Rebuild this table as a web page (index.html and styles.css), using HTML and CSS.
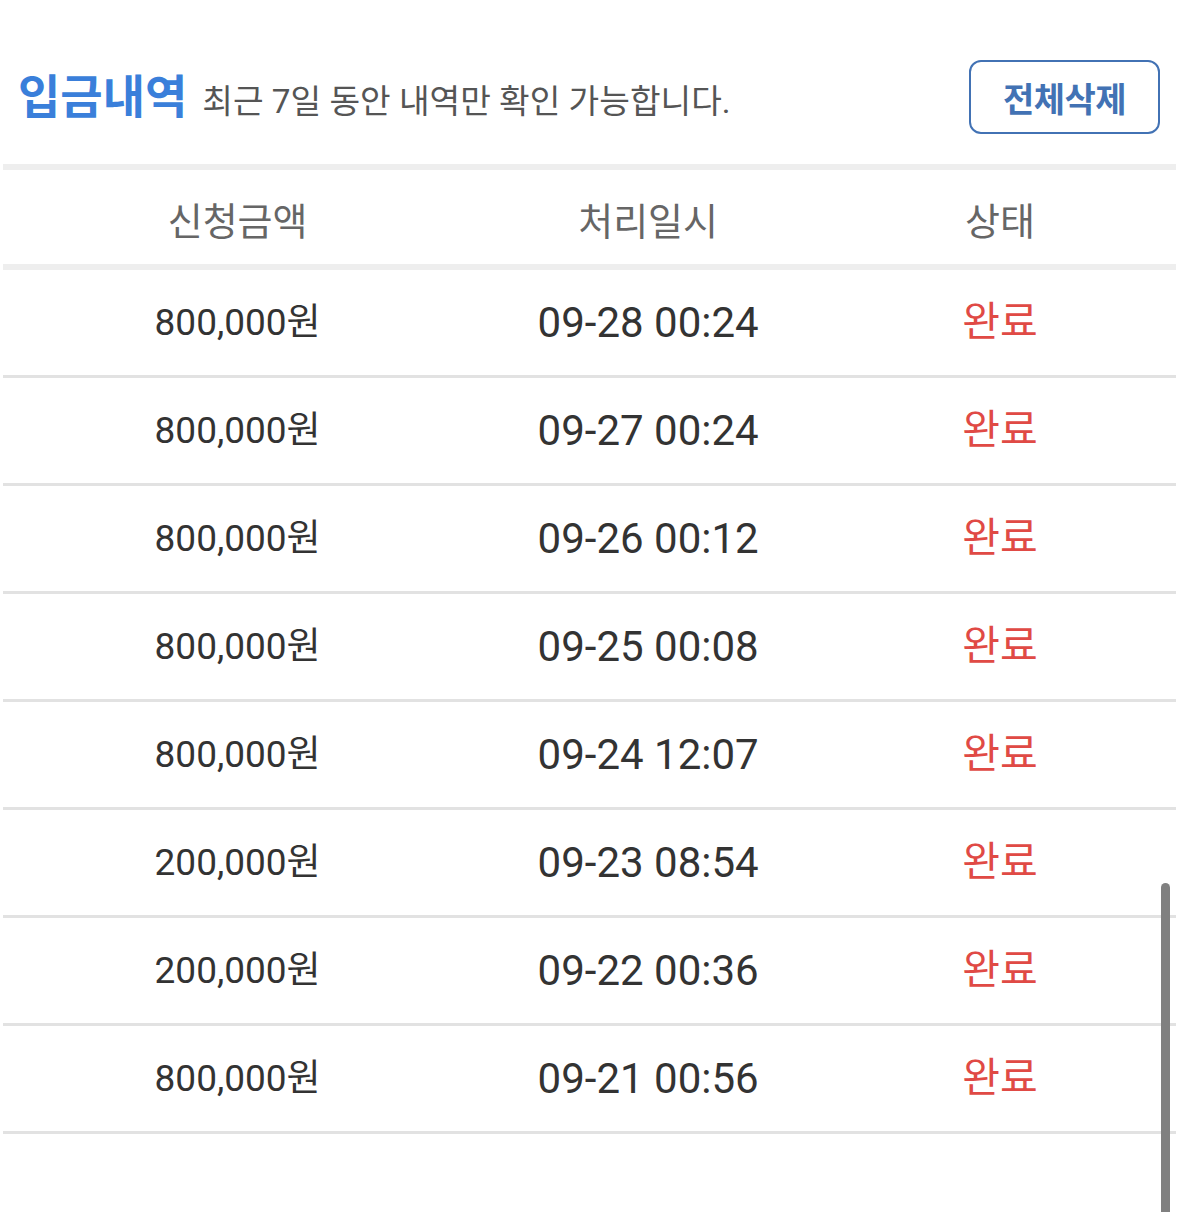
FILE: index.html
```html
<!DOCTYPE html>
<html lang="ko">
<head>
<meta charset="utf-8">
<title>입금내역</title>
<link rel="stylesheet" href="styles.css">
</head>
<body>
<div class="page">
  <header class="top">
    <div class="heading">
      <h1 class="title">입금내역</h1>
      <span class="subtitle">최근 7일 동안 내역만 확인 가능합니다.</span>
    </div>
    <button class="btn-delete" type="button">전체삭제</button>
  </header>

  <table class="history">
    <colgroup>
      <col class="c-amount">
      <col class="c-date">
      <col class="c-status">
    </colgroup>
    <thead>
      <tr>
        <th>신청금액</th>
        <th>처리일시</th>
        <th>상태</th>
      </tr>
    </thead>
    <tbody>
      <tr><td class="amount">800,000원</td><td class="date">09-28 00:24</td><td class="status">완료</td></tr>
      <tr><td class="amount">800,000원</td><td class="date">09-27 00:24</td><td class="status">완료</td></tr>
      <tr><td class="amount">800,000원</td><td class="date">09-26 00:12</td><td class="status">완료</td></tr>
      <tr><td class="amount">800,000원</td><td class="date">09-25 00:08</td><td class="status">완료</td></tr>
      <tr><td class="amount">800,000원</td><td class="date">09-24 12:07</td><td class="status">완료</td></tr>
      <tr><td class="amount">200,000원</td><td class="date">09-23 08:54</td><td class="status">완료</td></tr>
      <tr><td class="amount">200,000원</td><td class="date">09-22 00:36</td><td class="status">완료</td></tr>
      <tr><td class="amount">800,000원</td><td class="date">09-21 00:56</td><td class="status">완료</td></tr>
    </tbody>
  </table>
</div>
<div class="scrollbar"></div>
</body>
</html>
```
FILE: styles.css
```css
html, body {
  margin: 0;
  padding: 0;
  background: #ffffff;
}

body {
  font-family: Roboto, "Noto Sans CJK KR", sans-serif;
  color: #333333;
  overflow: hidden;
  height: 1212px;
}

.page {
  width: 1179px;
}

.top {
  display: flex;
  align-items: center;
  justify-content: space-between;
  height: 74px;
  padding: 60px 19px 30px 18px;
}

.heading {
  display: flex;
  align-items: baseline;
}

.title {
  margin: 0;
  font-size: 46px;
  font-weight: 700;
  color: #3a7fda;
  line-height: 1;
}

.subtitle {
  margin-left: 15px;
  font-size: 33.3px;
  color: #555555;
  line-height: 1;
}

.btn-delete {
  box-sizing: border-box;
  width: 191px;
  height: 74px;
  border: 2px solid #4272b4;
  border-radius: 12px;
  background: #ffffff;
  color: #4272b4;
  font-family: Roboto, "Noto Sans CJK KR", sans-serif;
  font-size: 34px;
  font-weight: 700;
  letter-spacing: -0.5px;
  padding: 0;
}

.history {
  width: 1173px;
  margin: 0 3px;
  border-collapse: collapse;
  table-layout: fixed;
}

.c-amount { width: 40%; }
.c-date { width: 30%; }
.c-status { width: 30%; }

.history thead tr {
  border-top: 6px solid #eeeeee;
  border-bottom: 6px solid #eeeeee;
}

.history th {
  height: 84px;
  padding: 10px 0 0;
  font-size: 38px;
  font-weight: 400;
  color: #666666;
  text-align: center;
  vertical-align: middle;
  line-height: 1;
}

.history tbody tr {
  border-bottom: 3px solid #e2e2e2;
}

.history td {
  height: 105px;
  padding: 0;
  text-align: center;
  vertical-align: middle;
  line-height: 1;
}

.amount {
  font-size: 37px;
  color: #333333;
}

.date {
  font-size: 42px;
  color: #333333;
}

.status {
  font-size: 41px;
  color: #e04a45;
}

.scrollbar {
  position: fixed;
  top: 883px;
  right: 9px;
  width: 9px;
  height: 340px;
  border-radius: 5px 5px 0 0;
  background: #808080;
}
```
